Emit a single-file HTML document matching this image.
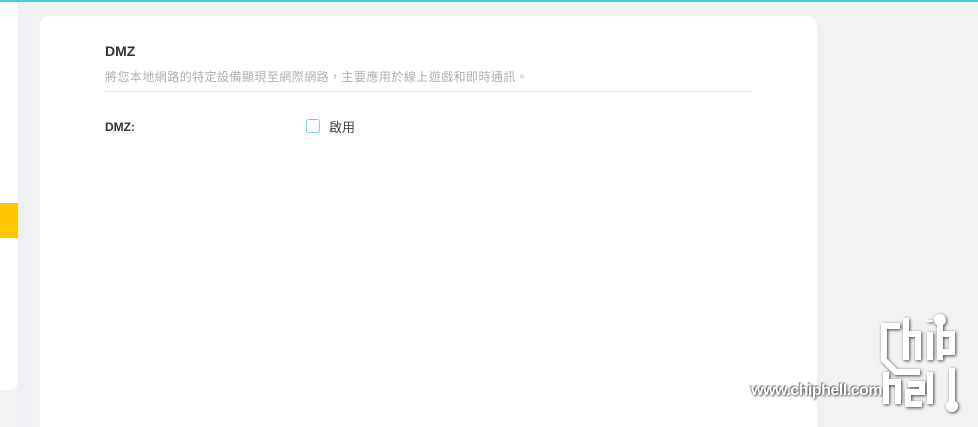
<!DOCTYPE html>
<html><head><meta charset="utf-8"><style>
html,body{margin:0;width:978px;height:427px;overflow:hidden}
body{background:#f2f2f2;position:relative;font-family:"Liberation Sans","Noto Sans CJK TC",sans-serif}
.top{position:absolute;left:0;top:0;width:978px;height:2px;background:#4fc7d4}
.side{position:absolute;left:0;top:2px;width:18px;height:388px;background:#fff;border-bottom-right-radius:8px}
.sidebg{position:absolute;left:18px;top:2px;width:14px;height:425px;background:#eef0f3}
.yel{position:absolute;left:0;top:203px;width:18px;height:35px;background:#ffc800}
.card{position:absolute;left:40px;top:16px;width:777px;height:411px;background:#fff;border-radius:10px 10px 0 0}
.h{position:absolute;left:105px;top:43px;font-size:14px;font-weight:bold;color:#333}
.d{position:absolute;left:105px;top:68px;font-size:12px;letter-spacing:0.45px;color:#b0b0b0}
.line{position:absolute;left:105px;top:91px;width:647px;height:1px;background:#e3e3e3}
.l{position:absolute;left:105px;top:120px;font-size:12px;font-weight:bold;color:#333}
.cb{position:absolute;left:306px;top:119px;width:12px;height:12px;border:1px solid #7dd3dc;border-radius:3px}
.en{position:absolute;left:329px;top:117px;font-size:13px;color:#444}
.wm{position:absolute;left:751px;top:382px;font-size:16px;font-weight:bold;letter-spacing:-0.5px;color:#fff;text-shadow:1px 1px 2px #444,-1px -1px 1px #777}
</style></head><body>
<div class="top"></div><div class="sidebg"></div><div class="side"></div><div class="yel"></div>
<div class="card"></div>
<div class="h">DMZ</div>
<div class="d">將您本地網路的特定設備顯現至網際網路，主要應用於線上遊戲和即時通訊。</div>
<div class="line"></div>
<div class="l">DMZ:</div>
<div class="cb"></div><div class="en">啟用</div>
<div class="wm">www.chiphell.com</div>
<svg style="position:absolute;left:878px;top:312px" width="90" height="100" viewBox="0 0 90 100" fill="none" stroke="#fff" stroke-width="6" filter="drop-shadow(1px 1px 1.5px #444)">
<path d="M22 14H6V48L18 60H42"/><path d="M28 6V48M28 22H40V48"/><path d="M52 20V48M52 8V10"/><circle cx="62" cy="8" r="3"/><path d="M62 12V48M62 22H74V40H62"/>
<path d="M8 60V92M8 70H20V92"/><path d="M30 72H44V80H30V92H44"/><path d="M52 60V92"/><path d="M74 56V90"/><circle cx="74" cy="94" r="3"/>
</svg>
</body></html>
